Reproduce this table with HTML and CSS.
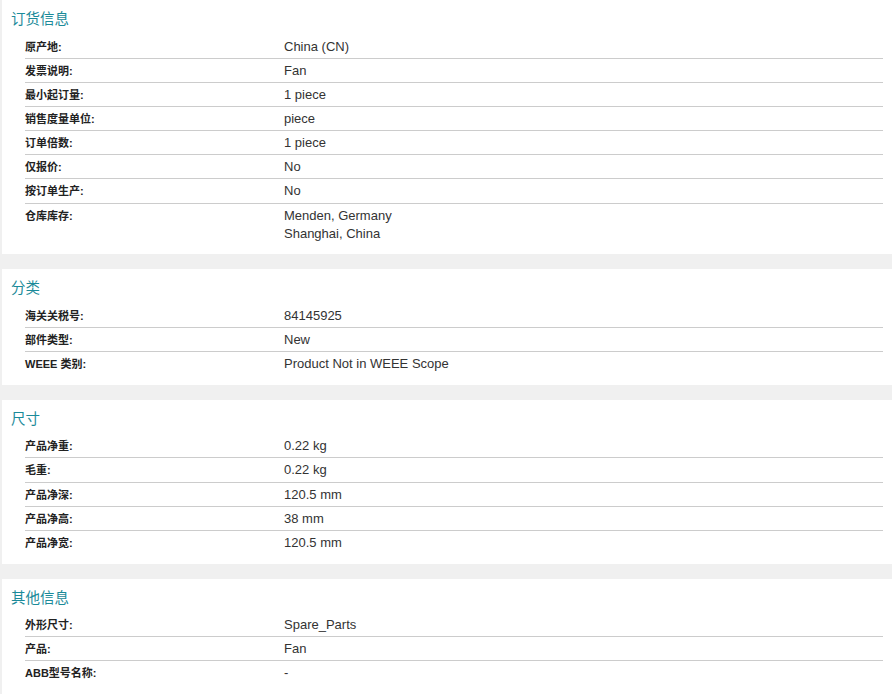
FILE: index.html
```html
<!DOCTYPE html>
<html lang="zh">
<head>
<meta charset="utf-8">
<title>产品信息</title>
<link rel="stylesheet" href="styles.css">
</head>
<body>
<div class="page">
  <section class="panel">
    <h2 class="panel-title">订货信息</h2>
    <div class="rows">
      <div class="row"><div class="label">原产地:</div><div class="value">China (CN)</div></div>
      <div class="row"><div class="label">发票说明:</div><div class="value">Fan</div></div>
      <div class="row"><div class="label">最小起订量:</div><div class="value">1 piece</div></div>
      <div class="row"><div class="label">销售度量单位:</div><div class="value">piece</div></div>
      <div class="row"><div class="label">订单倍数:</div><div class="value">1 piece</div></div>
      <div class="row"><div class="label">仅报价:</div><div class="value">No</div></div>
      <div class="row"><div class="label">按订单生产:</div><div class="value">No</div></div>
      <div class="row"><div class="label">仓库库存:</div><div class="value">Menden, Germany<br>Shanghai, China</div></div>
    </div>
  </section>
  <section class="panel">
    <h2 class="panel-title">分类</h2>
    <div class="rows">
      <div class="row"><div class="label">海关关税号:</div><div class="value">84145925</div></div>
      <div class="row"><div class="label">部件类型:</div><div class="value">New</div></div>
      <div class="row"><div class="label">WEEE 类别:</div><div class="value">Product Not in WEEE Scope</div></div>
    </div>
  </section>
  <section class="panel">
    <h2 class="panel-title">尺寸</h2>
    <div class="rows">
      <div class="row"><div class="label">产品净重:</div><div class="value">0.22 kg</div></div>
      <div class="row"><div class="label">毛重:</div><div class="value">0.22 kg</div></div>
      <div class="row"><div class="label">产品净深:</div><div class="value">120.5 mm</div></div>
      <div class="row"><div class="label">产品净高:</div><div class="value">38 mm</div></div>
      <div class="row"><div class="label">产品净宽:</div><div class="value">120.5 mm</div></div>
    </div>
  </section>
  <section class="panel">
    <h2 class="panel-title">其他信息</h2>
    <div class="rows">
      <div class="row"><div class="label">外形尺寸:</div><div class="value">Spare_Parts</div></div>
      <div class="row"><div class="label">产品:</div><div class="value">Fan</div></div>
      <div class="row"><div class="label">ABB型号名称:</div><div class="value">-</div></div>
    </div>
  </section>
</div>
</body>
</html>
```

FILE: styles.css
```css
html, body {
  margin: 0;
  padding: 0;
  background: #f0f0f0;
}
body {
  font-family: "Liberation Sans", Arial, "Noto Sans CJK SC", sans-serif;
  color: #333;
}
.page {
  display: flex;
  flex-direction: column;
  gap: 15px;
  padding-left: 2px;
}
.panel {
  background: #fff;
  padding: 8px 9px 9.5px 9px;
}
.panel-title {
  margin: 0 0 6.5px 0;
  font-family: "Noto Sans CJK SC", sans-serif;
  font-size: 14.5px;
  line-height: 20px;
  font-weight: 400;
  color: #1b8a99;
}
.rows {
  padding-left: 14px;
}
.row {
  display: grid;
  grid-template-columns: 259px 1fr;
  padding: 3px 0 2.17px 0;
  line-height: 18px;
  border-bottom: 1px solid #cccccc;
}
.row:last-child {
  border-bottom: none;
}
.label {
  font-family: "Liberation Sans", Arial, "Noto Sans CJK SC", sans-serif;
  font-size: 11px;
  font-weight: 700;
  color: #222;
}
.value {
  font-size: 13px;
  color: #333;
}
```
